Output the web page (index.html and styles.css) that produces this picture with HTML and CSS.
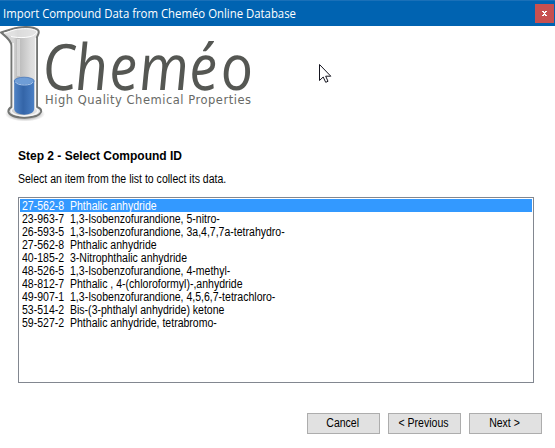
FILE: index.html
```html
<!DOCTYPE html>
<html lang="en">
<head>
<meta charset="utf-8">
<title>Import Compound Data from Cheméo Online Database</title>
<link rel="stylesheet" href="styles.css">
</head>
<body>
<div class="window">
  <header class="titlebar">
    <span class="title">Import Compound Data from Cheméo Online Database</span>
    <button class="close" aria-label="Close"><svg width="5" height="5" viewBox="0 0 5 5" shape-rendering="crispEdges"><path d="M0 0h2v1h1V0h2v1H4v1H3v1h1v1h1v1H3V4H2v1H0V4h1V3h1V2H1V1H0z" fill="#fff"/></svg></button>
  </header>
  <svg class="logo" width="260" height="100" viewBox="0 26 260 100">
    <defs>
      <linearGradient id="glass"><stop offset="0" stop-color="#ddd"/><stop offset=".32" stop-color="#d4d4d4"/><stop offset=".42" stop-color="#b8b8b8"/><stop offset=".75" stop-color="#ddd"/><stop offset="1" stop-color="#e8e8e8"/></linearGradient>
      <linearGradient id="liquid"><stop offset="0" stop-color="#4f83c6"/><stop offset=".45" stop-color="#3465a8"/><stop offset="1" stop-color="#4a7fc4"/></linearGradient>
      <radialGradient id="shade"><stop offset=".5" stop-color="#777" stop-opacity=".7"/><stop offset="1" stop-color="#888" stop-opacity="0"/></radialGradient>
    </defs>
    <ellipse cx="25" cy="114" rx="20" ry="7.500" fill="url(#shade)"/>
    <path d="M1 32.500C6 31 10 29.500 14 28.500C21 26.200 33 26.300 37.500 29.500C40.500 32 38 34.500 37 37V107C40 108 41.500 110 41 112C38 119.500 11 119.500 8.500 112C8 109 9.500 108 11.500 107V46C11.500 40 5 36 1 32.500Z" fill="url(#glass)" stroke="#737573" stroke-width="2" stroke-linejoin="round"/>
    <path d="M4 33C10 32 12 29.500 20 29C29 28 36 29.500 37 32C34 39 17 38 11 36.500" fill="#e4e4e4" fill-opacity=".8" stroke="#fff" stroke-width="1"/>
    <path d="M13.200 43V108C9 111 11 115 24 116C37 115.500 41 111 35.500 108V38" fill="none" stroke="#f8f8f8" stroke-width="1.300"/>
    <path d="M14.200 81V109C15 116.500 33.800 116.500 34.200 109V81Z" fill="url(#liquid)"/>
    <ellipse cx="24.200" cy="81" rx="10" ry="3.800" fill="#6f9dd6" stroke="#3c6fb4" stroke-width=".7"/>
    <path d="M15.500 82C17 86 32 86 33 82" fill="none" stroke="#a9c7eb" stroke-width="1"/>
    <path d="M18.500 39V76" stroke="#fff" stroke-opacity=".4" stroke-width="3"/>
    <text class="wordmark" transform="translate(0 90) scale(.9 1) skewX(6)" x="49 85 123 156 212 247" y="0">Cheméo</text>
    <text class="tagline" x="45" y="104" textLength="206">High Quality Chemical Properties</text>
  </svg>
  <main class="content">
    <h1 class="step">Step 2 - Select Compound ID</h1>
    <p class="hint"><span class="narrow">Select an item from the list to collect its data.</span></p>
    <ul class="list">
      <li class="row selected"><span class="id narrow">27-562-8</span><span class="narrow">Phthalic anhydride</span></li>
      <li class="row"><span class="id narrow">23-963-7</span><span class="narrow">1,3-Isobenzofurandione, 5-nitro-</span></li>
      <li class="row"><span class="id narrow">26-593-5</span><span class="narrow">1,3-Isobenzofurandione, 3a,4,7,7a-tetrahydro-</span></li>
      <li class="row"><span class="id narrow">27-562-8</span><span class="narrow">Phthalic anhydride</span></li>
      <li class="row"><span class="id narrow">40-185-2</span><span class="narrow">3-Nitrophthalic anhydride</span></li>
      <li class="row"><span class="id narrow">48-526-5</span><span class="narrow">1,3-Isobenzofurandione, 4-methyl-</span></li>
      <li class="row"><span class="id narrow">48-812-7</span><span class="narrow">Phthalic , 4-(chloroformyl)-,anhydride</span></li>
      <li class="row"><span class="id narrow">49-907-1</span><span class="narrow">1,3-Isobenzofurandione, 4,5,6,7-tetrachloro-</span></li>
      <li class="row"><span class="id narrow">53-514-2</span><span class="narrow">Bis-(3-phthalyl anhydride) ketone</span></li>
      <li class="row"><span class="id narrow">59-527-2</span><span class="narrow">Phthalic anhydride, tetrabromo-</span></li>
    </ul>
  </main>
  <footer class="actions">
    <button class="btn"><span class="label">Cancel</span></button>
    <button class="btn"><span class="label">&lt; Previous</span></button>
    <button class="btn"><span class="label">Next &gt;</span></button>
  </footer>
  <svg class="cursor" width="13" height="20" viewBox="0 0 13 20"><path d="M.5.500V16.500L4.200 13L6.700 18.300L9 17.300L6.700 12.200H11.800Z" fill="#fff" stroke="#15151f" stroke-width="1"/></svg>
</div>
</body>
</html>
```

FILE: styles.css
```css
* { box-sizing: border-box; }

body {
  margin: 0;
  background: #fff;
  color: #000;
  font: 12px/13px "Liberation Sans", Arial, sans-serif;
}

.window {
  position: relative;
  display: flex;
  flex-direction: column;
  width: 555px;
  height: 448px;
  overflow: hidden;
}

.titlebar {
  display: flex;
  align-items: center;
  justify-content: space-between;
  height: 26px;
  padding: 0 1px 0 3px;
  border-top: 1px solid #1a70b8;
  background: #0063b1;
  color: #fff;
}

.title {
  font: 12px/18px "Open Sans", sans-serif;
  white-space: nowrap;
  transform: scaleX(.947);
  transform-origin: left;
}

.close {
  display: grid;
  place-items: center;
  width: 19px;
  height: 19px;
  padding: 0;
  border: 0;
  background: #c75050;
}

.logo {
  display: block;
  overflow: visible;
}

.wordmark {
  fill: #555753;
  font-family: "Open Sans", sans-serif;
  font-size: 64px;
  font-style: italic;
}

.tagline {
  fill: #686a66;
  font: 11.500px "DejaVu Sans", sans-serif;
}

.content { padding: 23px 21px 0 18px; }

.step {
  margin: 0 0 10px;
  font-size: 12px;
  line-height: 14px;
}

.hint { margin: 0 0 11px; }

.narrow {
  display: inline-block;
  transform: scaleX(.877);
  transform-origin: left;
}

.list {
  height: 186px;
  margin: 0;
  padding: 1px;
  border: 1px solid #828790;
  list-style: none;
}

.row {
  display: flex;
  height: 13px;
  padding-left: 2px;
  line-height: 14px;
  white-space: nowrap;
}

.id { width: 48px; }

.selected {
  background: #3399ff;
  color: #fff;
}

.actions {
  display: flex;
  justify-content: flex-end;
  gap: 8px;
  padding: 30px 13px 0 0;
}

.btn {
  width: 73px;
  height: 21px;
  padding: 0 2px 0 0;
  border: 1px solid #adadad;
  background: #e1e1e1;
  color: #000;
  font: inherit;
}

.label {
  display: inline-block;
  transform: scaleX(.877);
}

.cursor {
  position: absolute;
  left: 319px;
  top: 64px;
}
```
